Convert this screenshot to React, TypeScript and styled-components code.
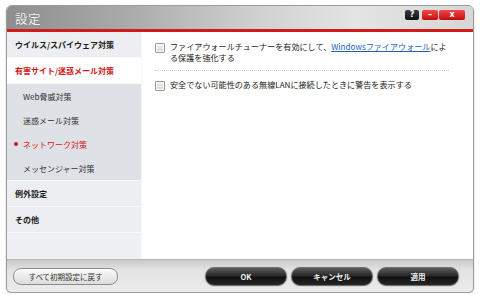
import React from "react";
import styled, { createGlobalStyle } from "styled-components";

const Global = createGlobalStyle`
  html, body { margin: 0; padding: 0; background: #ffffff; }
  body { font-family: "Noto Sans CJK JP", "Noto Sans", sans-serif; }
`;

const Window = styled.div`
  margin: 5px 0 0 6px;
  width: 466px;
  height: 286px;
  border: 1px solid #9c9c9c;
  border-radius: 6px;
  overflow: hidden;
  display: flex;
  flex-direction: column;
  box-shadow: 0 1px 2px rgba(0,0,0,0.25);
  background: #e6e6e6;
`;

const TitleBar = styled.div`
  height: 23px;
  flex: none;
  display: flex;
  align-items: center;
  justify-content: space-between;
  padding: 0 8px 0 8px;
  background: linear-gradient(90deg, #8e8e8e 0%, #a9a9a9 25%, #d2d2d2 55%, #e4e4e4 75%, #d6d6d6 100%);
  border-bottom: 3px solid #d11a1a;
`;

const Title = styled.span`
  color: #f4f4f4;
  font-size: 12.5px;
  letter-spacing: 0.5px;
  text-shadow: 0 0 1px rgba(0,0,0,0.3);
  margin-top: 2px;
`;

const Controls = styled.div`
  display: flex;
  gap: 3px;
  align-items: center;
  margin-top: -5px;
`;

const CtlBtn = styled.div<{ $red?: boolean; $w: number }>`
  width: ${(p) => p.$w}px;
  height: 10px;
  border-radius: 2px;
  background: ${(p) =>
    p.$red
      ? "linear-gradient(#f04848, #c30c0c)"
      : "linear-gradient(#3c3c3c, #111)"};
  color: #fff;
  font-family: "DejaVu Sans", sans-serif;
  font-size: 8px;
  font-weight: bold;
  display: flex;
  align-items: center;
  justify-content: center;
  line-height: 1;
`;

const RedGroup = styled.div`
  display: flex;
  gap: 1px;
`;

const Main = styled.div`
  flex: 1;
  display: flex;
  min-height: 0;
`;

const Sidebar = styled.div`
  width: 134px;
  flex: none;
  display: flex;
  flex-direction: column;
  background: #eceef1;
  border-right: 1px solid #f6f7f8;
  box-shadow: 1px 0 0 #d9dde2;
`;

const NavRow = styled.div<{ $active?: boolean }>`
  height: 25px;
  flex: none;
  display: flex;
  align-items: center;
  padding-left: 8px;
  font-size: 8px;
  font-weight: bold;
  color: ${(p) => (p.$active ? "#d01818" : "#1c1c1c")};
  background: ${(p) => (p.$active ? "#ffffff" : "#eceef1")};
  border-bottom: 1px solid #f9fafb;
`;

const SubGroup = styled.div`
  background: #dee1e6;
  display: flex;
  flex-direction: column;
  border-bottom: 1px solid #f9fafb;
`;

const SubRow = styled.div<{ $active?: boolean }>`
  height: 24px;
  display: flex;
  align-items: center;
  padding-left: 16px;
  font-size: 8px;
  color: ${(p) => (p.$active ? "#d01818" : "#333")};
  position: relative;
`;

const Bullet = styled.span`
  position: absolute;
  left: 7px;
  top: 10px;
  width: 4px;
  height: 4px;
  border-radius: 50%;
  background: #d01818;
`;

const SideFill = styled.div`
  flex: 1;
  background: #eef0f3;
`;

const Content = styled.div`
  flex: 1;
  background: #ffffff;
  padding: 10px 24px 0 13px;
`;

const Option = styled.div`
  display: flex;
  align-items: flex-start;
  gap: 5px;
  font-size: 8.1px;
  line-height: 10.5px;
  color: #222;
`;

const OptionText = styled.span`
  display: block;
  white-space: nowrap;
`;

const Box = styled.span`
  width: 8px;
  height: 8px;
  flex: none;
  margin-top: 1px;
  border: 1px solid #9a9a9a;
  border-radius: 1px;
  background: linear-gradient(#f2f2f2, #d8d8d8);
  box-shadow: inset 0 0 0 1px #fafafa;
`;

const Link = styled.span`
  color: #1b62b8;
  text-decoration: underline;
`;

const Divider = styled.div`
  height: 0;
  border-top: 1px dotted #c8c8c8;
  margin: 7px 0 9px 0;
`;

const Footer = styled.div`
  height: 32px;
  flex: none;
  display: flex;
  align-items: center;
  padding: 0 14px 0 6px;
  background: linear-gradient(#c9c9c9 0%, #e2e2e2 30%, #ececec 100%);
  border-top: 1px solid #b8b8b8;
`;

const ResetBtn = styled.div`
  width: 103px;
  height: 15px;
  border-radius: 8px;
  border: 1px solid #8c8c8c;
  background: linear-gradient(#fbfbfb, #dcdcdc);
  font-size: 7.5px;
  color: #333;
  display: flex;
  align-items: center;
  justify-content: center;
  box-shadow: inset 0 1px 0 #fff;
`;

const Spacer = styled.div`
  flex: 1;
`;

const Actions = styled.div`
  display: flex;
  gap: 4px;
`;

const DarkBtn = styled.div`
  width: 80px;
  height: 17px;
  border-radius: 9px;
  border: 1px solid #6f6f6f;
  background: linear-gradient(#5a5a5a 0%, #2a2a2a 45%, #111 55%, #262626 100%);
  color: #f2f2f2;
  font-size: 7.5px;
  font-weight: bold;
  display: flex;
  align-items: center;
  justify-content: center;
  box-shadow: 0 0 0 1px #d6d6d6;
`;

export default function App() {
  return (
    <>
      <Global />
      <Window>
        <TitleBar>
          <Title>設定</Title>
          <Controls>
            <CtlBtn $w={14}>?</CtlBtn>
            <RedGroup>
              <CtlBtn $red $w={16}>–</CtlBtn>
              <CtlBtn $red $w={26}>x</CtlBtn>
            </RedGroup>
          </Controls>
        </TitleBar>
        <Main>
          <Sidebar>
            <NavRow>ウイルス/スパイウェア対策</NavRow>
            <NavRow $active>有害サイト/迷惑メール対策</NavRow>
            <SubGroup>
              <SubRow>Web脅威対策</SubRow>
              <SubRow>迷惑メール対策</SubRow>
              <SubRow $active>
                <Bullet />
                ネットワーク対策
              </SubRow>
              <SubRow>メッセンジャー対策</SubRow>
            </SubGroup>
            <NavRow>例外設定</NavRow>
            <NavRow>その他</NavRow>
            <SideFill />
          </Sidebar>
          <Content>
            <Option>
              <Box />
              <OptionText>
                ファイアウォールチューナーを有効にして、<Link>Windowsファイアウォール</Link>によ
                <br />
                る保護を強化する
              </OptionText>
            </Option>
            <Divider />
            <Option>
              <Box />
              <OptionText>安全でない可能性のある無線LANに接続したときに警告を表示する</OptionText>
            </Option>
          </Content>
        </Main>
        <Footer>
          <ResetBtn>すべて初期設定に戻す</ResetBtn>
          <Spacer />
          <Actions>
            <DarkBtn>OK</DarkBtn>
            <DarkBtn>キャンセル</DarkBtn>
            <DarkBtn>適用</DarkBtn>
          </Actions>
        </Footer>
      </Window>
    </>
  );
}
